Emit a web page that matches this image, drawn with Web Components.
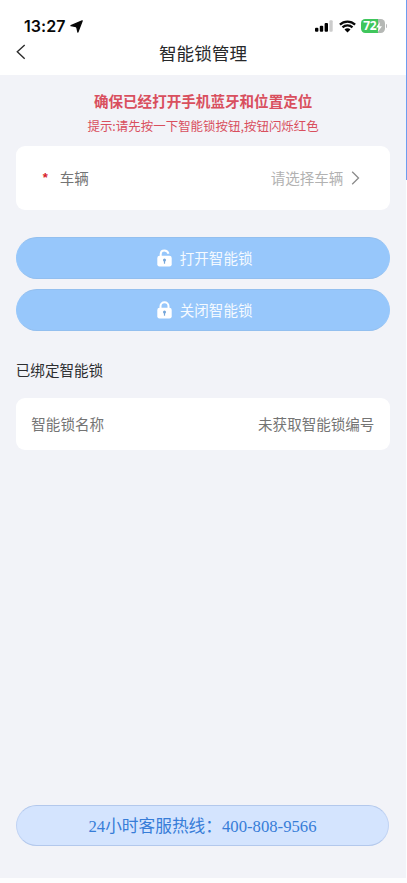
<!DOCTYPE html>
<html lang="zh-CN">
<head>
<meta charset="utf-8">
<title>智能锁管理</title>
<style>
html,body{margin:0;height:100%;background:#fdfdfe;overflow:hidden}
body{font-family:"Noto Sans CJK SC",sans-serif}
</style>
</head>
<body>
<lock-page></lock-page>
<script>
const define = (name, html) => customElements.define(name, class extends HTMLElement {
  constructor() {
    super();
    const t = document.createElement('template');
    t.innerHTML = html;
    this.attachShadow({mode: 'open'}).append(t.content.cloneNode(true));
  }
});

define('status-bar', `<style>
:host{display:flex;height:37px;box-sizing:border-box;padding:16px 19px 0 24px;justify-content:space-between;color:#080808;font-family:Inter,sans-serif}
.l,.r{display:flex;height:20px;align-items:center}
.t{font-size:16px;font-weight:600;line-height:20px;width:42px;white-space:nowrap;letter-spacing:.05px}
.l svg{margin-left:4px}
svg{display:block}
.w{margin:0 5px 0 6px}
.b{width:24px;height:13.6px;border-radius:4.2px;background:linear-gradient(90deg,#3fc65c 72%,#b5b8b5 72%);display:flex;align-items:center;padding-left:2.5px;box-sizing:border-box;color:#fff;font:700 12px/12px "Open Sans",Inter,sans-serif;letter-spacing:-.4px}
.b svg{margin-top:1px}
.n{width:1.5px;height:4px;border-radius:0 2px 2px 0;background:#bbb;margin-left:.8px}
</style>
<div class="l"><span class="t">13:27</span><svg width="13" height="13" viewBox="0 0 13 13"><path d="M12.2.8 7.9 12.1 6.9 7.6 6.1 6.5 1 5.7Z" fill="#080808" stroke="#080808" stroke-width="1.3" stroke-linejoin="round"/></svg></div>
<div class="r"><svg width="18" height="12" viewBox="0 0 18 12"><rect y="7.8" width="3.4" height="3.9" rx="1"/><rect x="4.8" y="5.8" width="3.4" height="5.9" rx="1"/><rect x="9.6" y="3.1" width="3.4" height="8.6" rx="1"/><rect x="14.4" y=".2" width="3.3" height="11.5" rx="1" fill="#ccc"/></svg>
<svg class="w" width="17" height="13" viewBox="0 0 17 13"><path d="M.9 4.6a11 11 0 0 1 15.2 0M3.5 7.4a7.2 7.2 0 0 1 10 0" fill="none" stroke="#080808" stroke-width="2.2"/><path d="M5.5 9.5a4.2 4.2 0 0 1 6 0L8.5 12.5Z"/></svg>
<div class="b">72<svg width="6" height="10" viewBox="0 0 6 10"><path d="M4 0 .1 5.5h2.5L1.8 10 6 4.2H3.4Z" fill="#fff"/></svg></div><i class="n"></i></div>`);

define('nav-bar', `<style>
:host{display:grid;grid-template-columns:48px 1fr 48px;height:38px;color:#27282a;width:406px}
svg{display:block;margin:7px 0 0 16px}
.t{text-align:center;font-size:17.6px;line-height:31px}
</style><svg width="10" height="16" viewBox="0 0 10 16"><path d="M8.7 1 1.3 7.8l7.4 6.9" fill="none" stroke="#2b2b2b" stroke-width="1.4"/></svg><div class="t"><slot></slot></div>`);

define('lock-notice', `<style>
:host{display:flex;flex-direction:column;align-items:center;height:71px;padding-top:14px;box-sizing:border-box;color:#d94f5e;white-space:nowrap}
.a{font-size:14.57px;font-weight:700;line-height:24px}.b{font-size:12.48px;line-height:26px}
</style><div class="a"><slot name="title"></slot></div><div class="b"><slot></slot></div>`);

define('white-card', `<style>
:host{display:flex;align-items:center;justify-content:space-between;box-sizing:border-box;background:#fff;border-radius:9px;color:#747474;font-size:14.55px;white-space:nowrap}
</style><slot></slot>`);

define('vehicle-label', `<style>
:host{display:flex;align-items:center;line-height:22px}i{font:bold 13px/22px "Liberation Sans",sans-serif;color:#d8222b;width:17px}
</style><i>*</i><slot></slot>`);

define('vehicle-picker', `<style>
:host{display:flex;align-items:center;color:#b2b2b2;line-height:22px}svg{margin-left:8px}
</style><slot></slot><svg width="9" height="14" viewBox="0 0 9 14"><path d="m1.2.8 6.3 6.2-6.3 6.2" fill="none" stroke="#8b8b8b" stroke-width="1.3"/></svg>`);

define('lock-button', `<style>
:host{display:flex;align-items:center;justify-content:center;box-sizing:border-box;height:42px;border-radius:21px;background:#97c7fb;border:1px solid #97c7fb;border-block-color:#93bfef;color:#f5faff;font-size:14.55px;line-height:22px;gap:8px;padding-left:3px}
svg{display:block}.open,.shut{display:none}:host([open]) .open,:host(:not([open])) .shut{display:block}
</style><svg width="15" height="18" viewBox="0 0 15 18"><g fill="none" stroke="#fff" stroke-width="2"><path class="open" d="M3.7 8V4.9a3.6 3.6 0 0 1 3.6-3.4q3.3 0 4.2 3.3"/><path class="shut" d="M3.5 8V5.3a4 4 0 0 1 8 0V8"/></g><rect x=".3" y="6.7" width="14.4" height="10.8" rx="2.3" fill="#fff"/><circle cx="7.5" cy="11" r="1.5" fill="#75a6d9"/><path d="M7.5 11v3.7" stroke="#75a6d9" stroke-width="1.2"/></svg><span><slot></slot></span>`);

define('service-line', `<style>
:host{display:flex;align-items:center;justify-content:center;box-sizing:border-box;height:41px;border:1px solid #c1d3f3;border-block-color:#b3c8ec;border-radius:21px;background:#d4e4fe;color:#377dd8;font:16.7px/24px "Liberation Serif","Noto Sans CJK SC",serif;white-space:nowrap;padding-top:2px}
</style><slot></slot>`);

define('lock-page', `<style>
:host{display:grid;grid-template-columns:406px 1px;height:883px;width:407px}
.screen{display:flex;flex-direction:column;height:878px;background:#f2f3f8}
header{background:#fff;height:75px}
main{display:flex;flex-direction:column;flex:1;padding:0 15.6px 0 15.8px}
.car{height:64px;padding:0 30px 1px 27px}
.actions{display:flex;flex-direction:column;gap:10px;margin-top:27px}
h2{font-size:14.55px;font-weight:400;color:#2c2d30;line-height:24px;margin:27px 0 16px}
.bound{height:52px;padding:0 16px 2px 15.5px}
service-line{margin:auto 1.5px 32px .3px}
.edge{height:180px;background:#6d9df0}
</style>
<div class="screen"><header><status-bar></status-bar><nav-bar>智能锁管理</nav-bar></header>
<main><lock-notice><span slot="title">确保已经打开手机蓝牙和位置定位</span>提示:请先按一下智能锁按钮,按钮闪烁红色</lock-notice>
<white-card class="car"><vehicle-label>车辆</vehicle-label><vehicle-picker>请选择车辆</vehicle-picker></white-card>
<div class="actions"><lock-button open>打开智能锁</lock-button><lock-button>关闭智能锁</lock-button></div>
<h2>已绑定智能锁</h2>
<white-card class="bound"><span>智能锁名称</span><span>未获取智能锁编号</span></white-card>
<service-line>24小时客服热线&#xFF1A;400-808-9566</service-line></main></div><div class="edge"></div>`);
</script>
</body>
</html>
